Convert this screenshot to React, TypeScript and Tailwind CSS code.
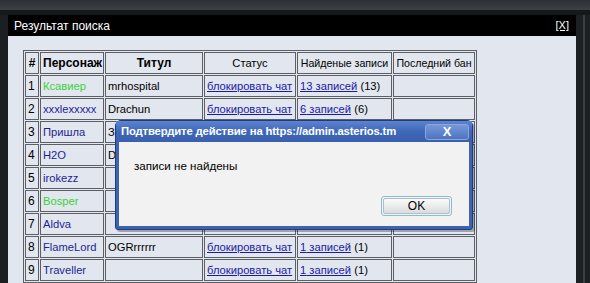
import React from "react";

type Row = {
  n: number;
  name: string;
  green?: boolean;
  title: string;
  records: number;
};

const rows: Row[] = [
  { n: 1, name: "Ксавиер", green: true, title: "mrhospital", records: 13 },
  { n: 2, name: "xxxlexxxxx", title: "Drachun", records: 6 },
  { n: 3, name: "Пришла", title: "Заслан", records: 2 },
  { n: 4, name: "H2O", title: "Dead", records: 3 },
  { n: 5, name: "irokezz", title: "", records: 1 },
  { n: 6, name: "Bosper", green: true, title: "", records: 2 },
  { n: 7, name: "Aldva", title: "", records: 1 },
  { n: 8, name: "FlameLord", title: "OGRrrrrrr", records: 1 },
  { n: 9, name: "Traveller", title: "", records: 1 },
];

const cell = "border border-[#5c5f63] h-[22px] px-[2px] py-0 whitespace-nowrap overflow-hidden";

function ResultsTable() {
  return (
    <table className="table-fixed w-[453px] border-separate border-spacing-[1px] border border-[#5c5f63] text-[11.2px] leading-[14px] text-black">
      <thead>
        <tr className="text-center">
          <th className={`${cell} w-[14px] font-bold text-[12px]`}>#</th>
          <th className={`${cell} w-[64px] font-bold text-[12px]`}>Персонаж</th>
          <th className={`${cell} w-[98px] font-bold text-[12px]`}>Титул</th>
          <th className={`${cell} w-[92px] font-normal px-0`}>Статус</th>
          <th className={`${cell} w-[95px] font-normal px-0 text-[10.6px]`}>Найденые записи</th>
          <th className={`${cell} w-[82px] font-normal px-0 text-[10.6px]`}>Последний бан</th>
        </tr>
      </thead>
      <tbody>
        {rows.map((r) => (
          <tr key={r.n}>
            <td className={`${cell} px-[1px] text-[12px]`}>{r.n}</td>
            <td className={`${cell} ${r.green ? "text-[#3ad33a]" : "text-[#1c1f96]"}`}>{r.name}</td>
            <td className={cell}>{r.title}</td>
            <td className={cell}>
              <span className="text-[#1a1aa6] underline">блокировать чат</span>
            </td>
            <td className={cell}>
              <span className="text-[#1a1aa6] underline">{r.records} записей</span> ({r.records})
            </td>
            <td className={cell}></td>
          </tr>
        ))}
      </tbody>
    </table>
  );
}

function ConfirmDialog() {
  return (
    <div className="absolute left-[115px] top-[120px] w-[358px] h-[110px] flex flex-col rounded-t-[6px] rounded-b-[3px] bg-[#3f64ad] border border-[#1f3c7e] shadow-[2px_2px_0_rgba(30,40,60,0.35)]">
      <div className="h-[21px] flex items-center justify-between pl-[5px] pr-[3px] bg-gradient-to-b from-[#5c84d0] via-[#3f67b8] to-[#3a60ae]">
        <span className="text-white font-bold text-[11.3px] tracking-[-0.15px]">
          Подтвердите действие на https://admin.asterios.tm
        </span>
        <div className="w-[44px] h-[16px] flex items-center justify-center rounded-[3px] border border-[#8aa6dd] bg-gradient-to-b from-[#7797d8] to-[#4e74c2] text-white text-[13px] font-bold leading-none">
          X
        </div>
      </div>
      <div className="flex-1 mx-[3px] mb-[3px] bg-[#f2f2f2] flex flex-col">
        <div className="pl-[15px] pt-[15px] text-[11.6px] text-black">записи не найдены</div>
        <div className="mt-auto mb-[10px] mr-[17px] flex justify-end">
          <div className="w-[71px] h-[20px] rounded-[3px] border border-[#7fc3d4] p-[1px]">
            <div className="h-full flex items-center justify-center rounded-[2px] border border-[#b8bcc4] bg-gradient-to-b from-[#fbfbfb] to-[#dcdcdc] text-[12px] text-black">
              OK
            </div>
          </div>
        </div>
      </div>
    </div>
  );
}

export default function App() {
  return (
    <div className="relative w-[590px] h-[283px] overflow-hidden bg-[#1c1f22] font-['Liberation_Sans',Arial,sans-serif]">
      {/* top strip */}
      <div className="h-[10px] bg-gradient-to-b from-[#2c3034] to-[#3c4146]" />
      <div className="h-[5px] bg-[#16191b]" />
      <div className="flex">
        <div className="w-[8px] shrink-0" />
        <div className="w-[568px] shrink-0 flex flex-col">
          <div className="h-[21px] bg-black flex items-center justify-between pl-[6px] pr-[7px]">
            <span className="text-white text-[12px]">Результат поиска</span>
            <span className="text-white text-[11px] underline leading-none">[X]</span>
          </div>
          <div className="h-[260px] bg-[#e2e6ee] pl-[15px] pt-[14px]">
            <ResultsTable />
          </div>
        </div>
        <div className="w-[7px] shrink-0 bg-[#1c2023]" />
        <div className="w-[2px] shrink-0 bg-[#3a3f44]" />
      </div>
      <ConfirmDialog />
    </div>
  );
}
